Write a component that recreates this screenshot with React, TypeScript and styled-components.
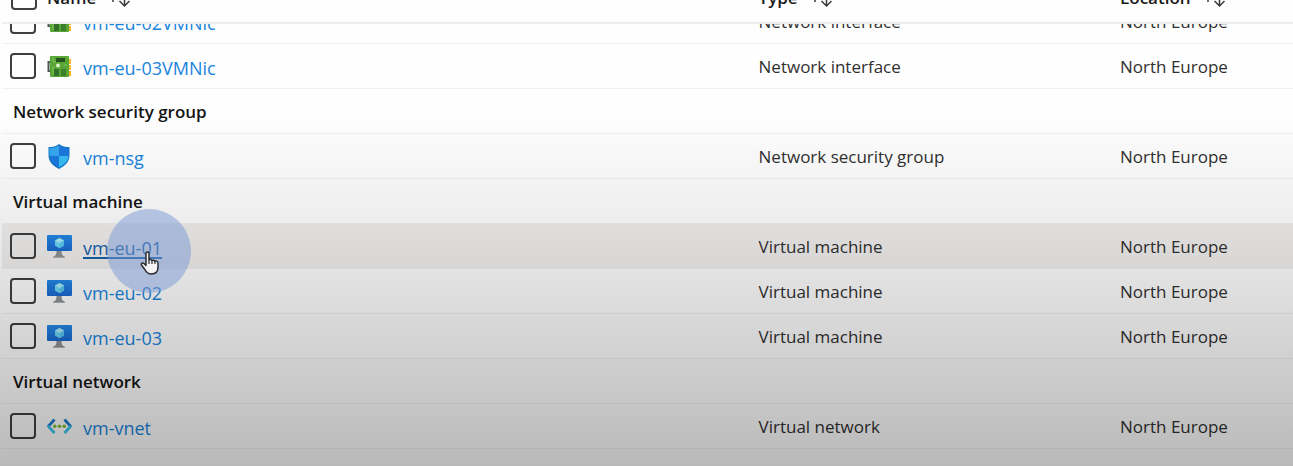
import React from "react";
import styled, { createGlobalStyle } from "styled-components";

const GlobalStyle = createGlobalStyle`
  *, *::before, *::after { box-sizing: border-box; }
  body {
    margin: 0;
    background: #fefefe;
    color: #303030;
    font-family: "Open Sans", "Noto Sans", sans-serif;
    font-size: 17px;
    line-height: 24px;
  }
`;

const Page = styled.main`
  position: relative;
  height: 100vh;
  overflow: hidden;

  &::after {
    content: "";
    position: absolute;
    inset: 0;
    pointer-events: none;
    background: linear-gradient(
      to bottom,
      rgba(0, 0, 0, 0) 25%,
      rgba(0, 0, 0, 0.03) 35%,
      rgba(0, 0, 0, 0.06) 45%,
      rgba(0, 0, 0, 0.12) 62%,
      rgba(0, 0, 0, 0.2) 81%,
      rgba(0, 0, 0, 0.27) 100%
    );
  }
`;

const Scroller = styled.div`
  margin-top: -29px;
  padding-left: 2px;
`;

const Table = styled.table`
  width: 100%;
  table-layout: fixed;
  border-collapse: separate;
  border-spacing: 0;
`;

const NameCol = styled.col``;
const TypeCol = styled.col`width: 28%;`;
const LocationCol = styled.col`width: 13.4%;`;

const HeadCell = styled.th`
  height: 53px;
  padding: 0;
  border-bottom: 2px solid #eeeeee;
  text-align: left;
  font-weight: 600;
  color: #1a1a1a;
`;

const Line = styled.div`
  display: flex;
  align-items: center;
  padding-left: 8px;
`;

const HeadLine = styled(Line)<{ $flush?: boolean }>`
  gap: 10px;
  padding-left: ${(p) => (p.$flush ? 0 : 9)}px;
`;

const SortButton = styled.button`
  display: flex;
  align-items: center;
  gap: 12px;
  padding: 2px 0 0;
  border: 0;
  background: none;
  font: inherit;
  color: inherit;
`;

const Row = styled.tr<{ $hovered?: boolean }>`
  background: ${(p) => (p.$hovered ? "#f1efee" : "transparent")};
`;

const Cell = styled.td<{ $cut?: boolean }>`
  position: relative;
  height: ${(p) => (p.$cut ? 20 : 45)}px;
  padding: 0;
  border-bottom: 1px solid #f1f1f1;
`;

const GroupCell = styled.th`
  height: 45px;
  padding: 2px 0 0 11px;
  border-bottom: 1px solid #f1f1f1;
  text-align: left;
  font-weight: 600;
  color: #141414;
`;

/* Shows only the lower part of a row that is scrolled under the header. */
const Clip = styled.div<{ $cut?: boolean }>`
  display: flex;
  align-items: ${(p) => (p.$cut ? "flex-end" : "center")};
  height: ${(p) => (p.$cut ? 19 : 44)}px;
  overflow: ${(p) => (p.$cut ? "hidden" : "visible")};
`;

const Body = styled.div`
  display: flex;
  align-items: center;
  flex: none;
  height: 44px;
`;

const Label = styled.span`
  padding-top: 2px;
`;

const Check = styled.input`
  appearance: none;
  flex: none;
  width: 26px;
  height: 26px;
  margin: 0;
  border: 2px solid #3f3f3f;
  border-radius: 4px;
  background: transparent;
`;

const Icon = styled.svg`
  display: block;
  flex: none;
  width: 26px;
  height: 26px;
  margin: 0 11px 0 10px;
`;

const Link = styled.a<{ $hovered?: boolean }>`
  padding-top: 4px;
  font-size: 18px;
  color: ${(p) => (p.$hovered ? "#1462ab" : "#1a84dc")};
  text-decoration: ${(p) => (p.$hovered ? "underline" : "none")};
  text-decoration-thickness: 2px;
  text-underline-offset: 2px;
`;

const Spotlight = styled.div`
  position: absolute;
  left: 105px;
  top: -15px;
  z-index: 1;
  width: 84px;
  height: 84px;
  border-radius: 50%;
  background: rgba(120, 152, 212, 0.5);
  pointer-events: none;
`;

const Pointer = styled.svg`
  position: absolute;
  left: 33px;
  top: 42px;
  width: 20px;
  height: 24px;
`;

const NicIcon = () => (
  <Icon viewBox="0 0 26 26" aria-hidden="true">
    <path d="M4.500 9H2.500v9h2" fill="none" stroke="#4b5a52" strokeWidth="2" />
    <rect x="21" y="6" width="4" height="5" fill="#f3c02c" />
    <rect x="21" y="12" width="4" height="5" fill="#f3c02c" />
    <rect x="21" y="18" width="4" height="5" fill="#f3b01c" />
    <rect x="4" y="3" width="19" height="21" rx="1" fill="#58a636" />
    <path d="M7 4v5h3M7 13v9M18 12h3" fill="none" stroke="#7fc65a" strokeWidth="1" />
    <rect x="10" y="5" width="9" height="4" fill="#24531b" />
    <rect x="8" y="16" width="5" height="7" fill="#35702a" />
    <rect x="15" y="16" width="5" height="7" fill="#3c7f2a" />
    <circle cx="12" cy="12.500" r="2" fill="#d9f0cd" />
  </Icon>
);

const ShieldIcon = () => (
  <Icon viewBox="0 0 26 26" aria-hidden="true">
    <path d="M13 1c3 2.500 6.500 3 10.500 3v8c0 7-4.500 11-10.500 14C7 23 2.500 19 2.500 12V4C7 4 10 3.500 13 1z" fill="#1479c9" />
    <path d="M13 2.500V13H3.500V5c4 0 6.500-.5 9.500-2.500z" fill="#35a7ef" />
    <path d="M13 2.500V13h9.500V5c-4 0-6.500-.5-9.500-2.500z" fill="#1a78dc" />
    <path d="M3.500 13H13v11.500C8 21.500 4 18.500 3.500 13z" fill="#1a78dc" />
    <path d="M22.500 13H13v11.500c5-3 9-6 9.500-11.500z" fill="#37bdf6" />
  </Icon>
);

const VmIcon = () => (
  <Icon viewBox="0 0 26 26" aria-hidden="true">
    <defs>
      <linearGradient id="vmScreen" x1="0" y1="0" x2="0" y2="1">
        <stop offset="0" stopColor="#2489e6" />
        <stop offset="1" stopColor="#1a68d0" />
      </linearGradient>
    </defs>
    <path d="M10.500 18h5c0 3 .5 4.500 3 5.500V25H7.500v-1.500c2.500-1 3-2.500 3-5.500z" fill="#8f9295" />
    <rect x="7" y="24" width="12" height="1" fill="#b0b2b4" />
    <rect x="1" y="2" width="25" height="16" rx="1" fill="url(#vmScreen)" />
    <path d="M13.500 5l4.500 2.500v5L13.500 15.300 9 12.500v-5z" fill="#6fd6f5" />
    <path d="M13.500 5l4.500 2.500-4.500 2.700L9 7.500z" fill="#a5e9fa" />
    <path d="M13.500 10.200l4.500-2.700v5l-4.500 2.800z" fill="#58c6ee" />
  </Icon>
);

const VnetIcon = () => (
  <Icon viewBox="0 0 26 26" aria-hidden="true" fill="none" strokeWidth="2.800">
    <path d="M8.500 6.500L2 13.700" stroke="#1f7bcf" />
    <path d="M2 13L8.500 20" stroke="#3cc3ec" />
    <path d="M18.500 6.500L25 13.700" stroke="#1f7bcf" />
    <path d="M25 13l-6.500 7" stroke="#3cc3ec" />
    <g fill="#80bd35">
      <circle cx="8.800" cy="13.300" r="1.800" />
      <circle cx="13.500" cy="13.300" r="1.800" />
      <circle cx="18.200" cy="13.300" r="1.800" />
    </g>
  </Icon>
);

const SortSvg = styled.svg`
  display: block;
  width: 22px;
  height: 20px;
`;

const SortIcon = () => (
  <SortSvg viewBox="0 0 22 20" fill="none" stroke="#3a3a3a" strokeWidth="1.500" aria-hidden="true">
    <path d="M5 14V3M1 7l4-4 4 4" />
    <path d="M16.500 4v14M11.500 13l5 5 5-5" />
  </SortSvg>
);

const icons = { nic: NicIcon, shield: ShieldIcon, vm: VmIcon, vnet: VnetIcon };

type Resource = {
  name: string;
  icon: keyof typeof icons;
  type: string;
  cut?: boolean;
  hovered?: boolean;
};

type Group = { title?: string; items: Resource[] };

const groups: Group[] = [
  {
    items: [
      { name: "vm-eu-02VMNic", icon: "nic", type: "Network interface", cut: true },
      { name: "vm-eu-03VMNic", icon: "nic", type: "Network interface" },
    ],
  },
  {
    title: "Network security group",
    items: [{ name: "vm-nsg", icon: "shield", type: "Network security group" }],
  },
  {
    title: "Virtual machine",
    items: [
      { name: "vm-eu-01", icon: "vm", type: "Virtual machine", hovered: true },
      { name: "vm-eu-02", icon: "vm", type: "Virtual machine" },
      { name: "vm-eu-03", icon: "vm", type: "Virtual machine" },
    ],
  },
  {
    title: "Virtual network",
    items: [{ name: "vm-vnet", icon: "vnet", type: "Virtual network" }],
  },
];

function HandPointer() {
  return (
    <Spotlight>
      <Pointer viewBox="0 0 20 24" aria-hidden="true">
        <path
          d="M6 2.500c0-2 3-2 3 0V9c.5-1 2.700-.8 2.900.7.6-.9 2.500-.6 2.800.7 1-.9 3.300-.4 3.300 1.600v4c0 4-2 7-6.500 7-3.500 0-5-1.500-6.300-4L1.500 14c-.8-1.700 1.200-2.700 2.500-1.500l2 2z"
          fill="#f4f4f6"
          stroke="#2c2c30"
          strokeWidth="1.500"
          strokeLinejoin="round"
        />
        <path d="M9 9v4M12 10v3M15 11v2" stroke="#2c2c30" strokeWidth="1.200" fill="none" />
      </Pointer>
    </Spotlight>
  );
}

function ResourceRow({ item }: { item: Resource }) {
  const Glyph = icons[item.icon];
  return (
    <Row $hovered={item.hovered}>
      <Cell $cut={item.cut}>
        <Clip $cut={item.cut}>
          <Body>
            <Line>
              <Check type="checkbox" aria-label={`Select ${item.name}`} />
              <Glyph />
              <Link href="#" $hovered={item.hovered}>{item.name}</Link>
            </Line>
          </Body>
        </Clip>
        {item.hovered && <HandPointer />}
      </Cell>
      <Cell $cut={item.cut}>
        <Clip $cut={item.cut}><Body><Label>{item.type}</Label></Body></Clip>
      </Cell>
      <Cell $cut={item.cut}>
        <Clip $cut={item.cut}><Body><Label>North Europe</Label></Body></Clip>
      </Cell>
    </Row>
  );
}

export default function App() {
  return (
    <Page>
      <GlobalStyle />
      <Scroller>
        <Table>
          <colgroup>
            <NameCol />
            <TypeCol />
            <LocationCol />
          </colgroup>
          <thead>
            <tr>
              <HeadCell scope="col">
                <HeadLine>
                  <Check type="checkbox" aria-label="Select all" />
                  <SortButton type="button">Name <SortIcon /></SortButton>
                </HeadLine>
              </HeadCell>
              <HeadCell scope="col">
                <HeadLine $flush><SortButton type="button">Type <SortIcon /></SortButton></HeadLine>
              </HeadCell>
              <HeadCell scope="col">
                <HeadLine $flush><SortButton type="button">Location <SortIcon /></SortButton></HeadLine>
              </HeadCell>
            </tr>
          </thead>
          {groups.map((group) => (
            <tbody key={group.title ?? "top"}>
              {group.title && (
                <tr>
                  <GroupCell scope="colgroup" colSpan={3}>{group.title}</GroupCell>
                </tr>
              )}
              {group.items.map((item) => (
                <ResourceRow key={item.name} item={item} />
              ))}
            </tbody>
          ))}
        </Table>
      </Scroller>
    </Page>
  );
}
